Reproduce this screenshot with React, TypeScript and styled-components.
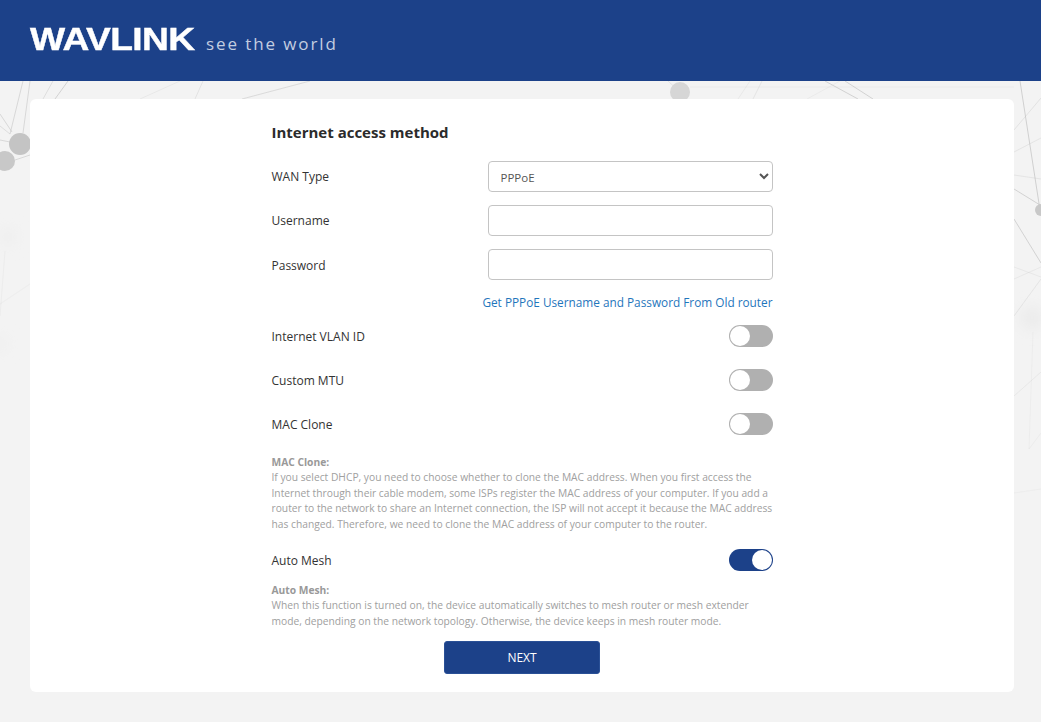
import React from "react";
import styled, { createGlobalStyle } from "styled-components";

const Global = createGlobalStyle`
  html, body { margin: 0; padding: 0; background: #f3f3f3; }
  body { font-family: "Open Sans", "Noto Sans", sans-serif; color: #333; }
`;

const Page = styled.div`
  position: relative;
  width: 1041px;
  height: 722px;
  overflow: hidden;
  display: flex;
  flex-direction: column;
`;

const Backdrop = styled.svg`
  position: absolute;
  left: 0;
  top: 0;
  width: 1041px;
  height: 722px;
`;

const Header = styled.header`
  position: relative;
  height: 81px;
  flex: none;
  background: #1c4189;
  display: flex;
  align-items: center;
  padding-left: 30px;
  gap: 10px;
`;

const Wordmark = styled.span`
  display: inline-block;
  font: 700 31px/1 "Liberation Sans", Arial, sans-serif;
  color: #fff;
  width: 166px;
  height: 31px;
  margin-top: -2px;
  white-space: nowrap;
  transform-origin: left center;
  transform: scaleX(1.2);
  -webkit-text-stroke: 0.4px #fff;
  letter-spacing: -0.5px;
`;

const Slogan = styled.span`
  font: 400 17px/1 "Open Sans", sans-serif;
  color: #c3cde0;
  letter-spacing: 1.9px;
  margin-top: 5px;
  white-space: nowrap;
`;

const Card = styled.main`
  position: relative;
  width: 984px;
  height: 593px;
  margin: 18px 0 0 30px;
  background: #fff;
  border-radius: 6px;
  box-sizing: border-box;
  padding-top: 23px;
  display: flex;
  justify-content: center;
`;

const Form = styled.form`
  width: 501px;
  display: flex;
  flex-direction: column;
`;

const Title = styled.h2`
  margin: 0 0 19px;
  height: 20px;
  font-size: 15px;
  line-height: 20px;
  font-weight: 700;
  color: #2b2b2b;
`;

const Row = styled.div`
  display: flex;
  align-items: center;
  justify-content: space-between;
  height: 31px;
  margin-bottom: 13px;
`;

const Label = styled.label<{ $drop?: number }>`
  font-size: 12px;
  line-height: 16px;
  color: #333;
  padding-top: ${(p) => p.$drop ?? 1}px;
`;

const fieldBase = `
  width: 285px;
  height: 31px;
  box-sizing: border-box;
  border: 1px solid #c4c4c4;
  border-radius: 4px;
  background: #fff;
  font-family: "Open Sans", sans-serif;
  font-size: 11.5px;
  color: #555;
  outline: none;
`;

const Select = styled.select`
  ${fieldBase}
  padding: 1px 0 0 8px;
`;

const Input = styled.input`
  ${fieldBase}
  padding: 0 10px;
`;

const LinkRow = styled.div`
  display: flex;
  justify-content: flex-end;
  height: 16px;
  margin: 1px 0 15px;
`;

const OldRouterLink = styled.a`
  font-size: 11.8px;
  line-height: 16px;
  color: #1f76bc;
  text-decoration: none;
`;

const ToggleRow = styled.div<{ $gap?: number }>`
  display: flex;
  align-items: center;
  justify-content: space-between;
  height: 22px;
  margin-bottom: ${(p) => p.$gap ?? 22}px;
`;

const Toggle = styled.span<{ $on?: boolean }>`
  position: relative;
  display: block;
  width: 44px;
  height: 22px;
  border-radius: 11px;
  background: ${(p) => (p.$on ? "#1c4189" : "#b0b0b0")};
  &::after {
    content: "";
    position: absolute;
    top: 1px;
    left: ${(p) => (p.$on ? "23px" : "1px")};
    width: 20px;
    height: 20px;
    border-radius: 50%;
    background: #fff;
  }
`;

const Help = styled.div<{ $after: number }>`
  font-size: 10.25px;
  line-height: 15.4px;
  color: #a0a0a0;
  margin-bottom: ${(p) => p.$after}px;
  & > b {
    display: block;
    font-weight: 700;
    color: #999;
  }
`;

const Next = styled.button`
  align-self: center;
  flex: none;
  width: 156px;
  height: 33px;
  border: 1px solid #2a5096;
  border-radius: 3px;
  background: #1c4189;
  color: #fff;
  font-family: "Open Sans", sans-serif;
  font-size: 12px;
`;

const lines: [number, number, number, number, number][] = [
  [23, 81, 10, 134, 0.5], [30, 81, 23, 133, 0.5], [0, 114, 12, 132, 0.5], [0, 126, 10, 134, 0.4],
  [0, 140, 10, 142, 0.5], [15, 160, 30, 155, 0.5], [68, 81, 55, 99, 0.6], [53, 81, 43, 99, 0.4],
  [180, 81, 140, 99, 0.2], [203, 81, 195, 99, 0.3], [310, 81, 242, 99, 0.45],
  [5, 251, 0, 316, 0.12], [0, 304, 30, 284, 0.12],
  [750, 81, 738, 99, 0.2], [762, 81, 753, 99, 0.25], [825, 81, 858, 99, 0.6], [845, 81, 873, 99, 0.6],
  [840, 81, 807, 99, 0.15], [690, 87, 1014, 87, 0.1], [668, 81, 680, 92, 0.3],
  [1020, 81, 1040, 210, 0.65], [1014, 130, 1041, 98, 0.3], [1014, 152, 1041, 138, 0.25],
  [1014, 175, 1041, 179, 0.25], [1014, 189, 1040, 205, 0.6], [1014, 219, 1041, 263, 0.6],
  [1014, 279, 1041, 267, 0.2], [1014, 267, 1041, 277, 0.2], [1014, 316, 1041, 279, 0.25],
  [1014, 396, 1041, 372, 0.2], [1033, 332, 1029, 449, 0.12], [1029, 449, 1041, 433, 0.12],
  [1014, 493, 1041, 489, 0.1],
];

export default function App() {
  return (
    <Page>
      <Global />
      <Backdrop viewBox="0 0 1041 722" aria-hidden="true">
        <defs>
          <filter id="soft" x="-80%" y="-80%" width="260%" height="260%">
            <feGaussianBlur stdDeviation="7" />
          </filter>
        </defs>
        <circle cx="1032" cy="318" r="12" fill="#ebebeb" filter="url(#soft)" />
        <circle cx="8" cy="237" r="9" fill="#eeeeee" filter="url(#soft)" />
        <circle cx="0" cy="344" r="8" fill="#efefef" filter="url(#soft)" />
        {lines.map(([x1, y1, x2, y2, o], i) => (
          <line key={i} x1={x1} y1={y1} x2={x2} y2={y2} stroke="#bdbdbd" strokeOpacity={o} strokeWidth="1" />
        ))}
        <circle cx="20" cy="144" r="11" fill="#c4c4c4" />
        <circle cx="5" cy="161" r="10" fill="#c8c8c8" />
        <circle cx="680" cy="92" r="10" fill="#d6d6d6" />
        <circle cx="1041" cy="210" r="6" fill="#c8c8c8" />
      </Backdrop>
      <Header>
        <Wordmark>WAVLINK</Wordmark>
        <Slogan>see the world</Slogan>
      </Header>
      <Card>
        <Form>
          <Title>Internet access method</Title>
          <Row>
            <Label>WAN Type</Label>
            <Select defaultValue="PPPoE">
              <option>PPPoE</option>
              <option>DHCP</option>
              <option>Static IP</option>
            </Select>
          </Row>
          <Row>
            <Label>Username</Label>
            <Input />
          </Row>
          <Row>
            <Label $drop={3}>Password</Label>
            <Input type="password" />
          </Row>
          <LinkRow>
            <OldRouterLink href="#">Get PPPoE Username and Password From Old router</OldRouterLink>
          </LinkRow>
          <ToggleRow>
            <Label $drop={2}>Internet VLAN ID</Label>
            <Toggle />
          </ToggleRow>
          <ToggleRow>
            <Label $drop={2}>Custom MTU</Label>
            <Toggle />
          </ToggleRow>
          <ToggleRow $gap={20}>
            <Label $drop={2}>MAC Clone</Label>
            <Toggle />
          </ToggleRow>
          <Help $after={17}>
            <b>MAC Clone:</b>
            If you select DHCP, you need to choose whether to clone the MAC address. When you first access the Internet through their cable modem, some ISPs register the MAC address of your computer. If you add a router to the network to share an Internet connection, the ISP will not accept it because the MAC address has changed. Therefore, we need to clone the MAC address of your computer to the router.
          </Help>
          <ToggleRow $gap={12}>
            <Label $drop={2}>Auto Mesh</Label>
            <Toggle $on />
          </ToggleRow>
          <Help $after={12}>
            <b>Auto Mesh:</b>
            When this function is turned on, the device automatically switches to mesh router or mesh extender mode, depending on the network topology. Otherwise, the device keeps in mesh router mode.
          </Help>
          <Next type="button">NEXT</Next>
        </Form>
      </Card>
    </Page>
  );
}
